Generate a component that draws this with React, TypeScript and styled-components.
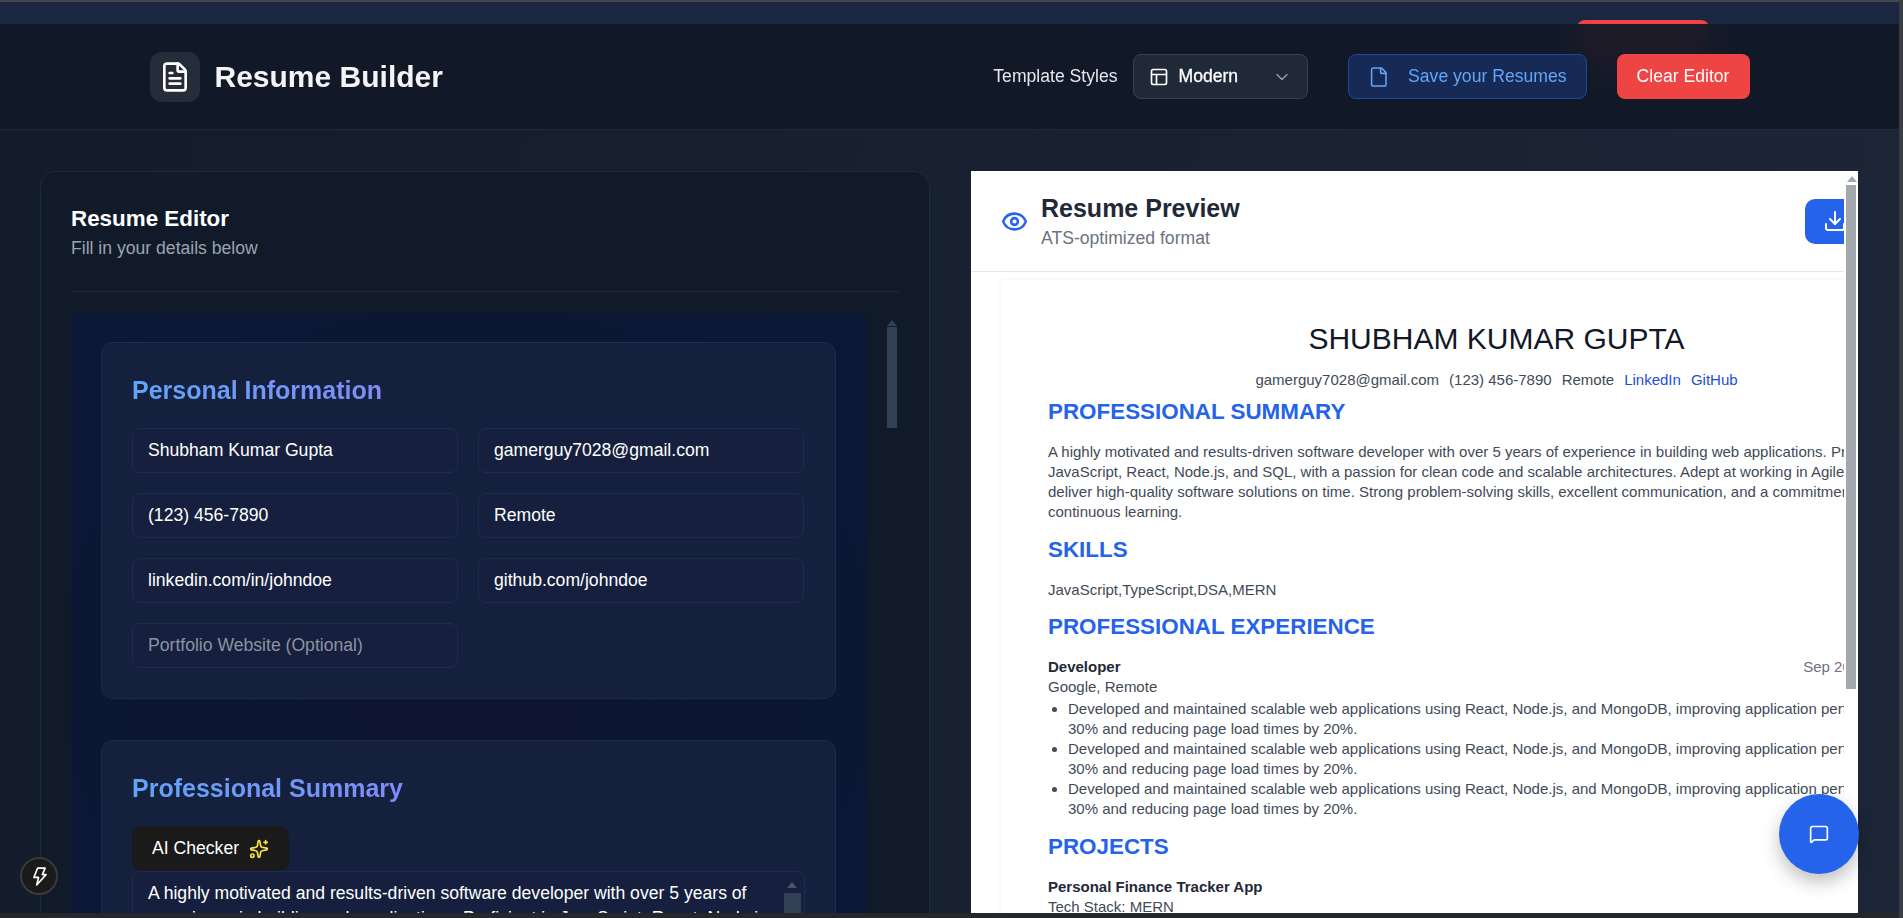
import React from "react";
import styled, { createGlobalStyle } from "styled-components";
import {
  ChevronDown,
  Download,
  Eye,
  File,
  FileText,
  Layout,
  MessageSquare,
  Sparkles,
} from "lucide-react";

const GlobalStyle = createGlobalStyle`
  * {
    box-sizing: border-box;
  }

  html,
  body {
    margin: 0;
    height: 100%;
    overflow: hidden;
    background: #2b2b2b;
    font-family: "Liberation Sans", Arial, sans-serif;
  }
`;

/* Shell */
const Shell = styled.div`
  display: flex;
  height: 918px;
  position: relative;
`;

const WindowEdge = styled.div`
  background: #3a3d42;
  flex: 0 0 4px;
`;

const Page = styled.div`
  background: linear-gradient(100deg, #121c2a 0%, #1c2636 100%);
  display: flex;
  flex: 1;
  flex-direction: column;
  min-width: 0;
  position: relative;
`;

const TopEdge = styled.div`
  background: #45474b;
  flex: 0 0 2px;
`;

const TopBar = styled.div`
  background: #1b2640;
  flex: 0 0 22px;
`;

const BottomEdge = styled.div`
  background: #25272b;
  flex: 0 0 5px;
  z-index: 3;
`;

/* Button sitting behind the translucent header */
const GhostButton = styled.div`
  background: #ef4444;
  border-radius: 8px;
  height: 45px;
  left: 1577px;
  position: absolute;
  top: 20px;
  width: 132px;
`;

/* Header */
const Header = styled.header`
  backdrop-filter: blur(12px);
  background: rgba(17, 24, 39, 0.94);
  border-bottom: 1px solid #1f2a3a;
  display: flex;
  flex: 0 0 106px;
  justify-content: center;
  position: relative;
  z-index: 1;
`;

const HeaderInner = styled.div`
  align-items: center;
  display: flex;
  height: 105px;
  justify-content: space-between;
  width: 1600px;
`;

const Brand = styled.div`
  align-items: center;
  display: flex;
  gap: 15px;
`;

const BrandIcon = styled.div`
  align-items: center;
  background: #252d3a;
  border-radius: 12px;
  color: #fff;
  display: flex;
  height: 50px;
  justify-content: center;
  width: 50px;
`;

const BrandName = styled.h1`
  color: #f3f4f6;
  font-size: 30px;
  font-weight: 700;
  margin: 0;
`;

const Actions = styled.div`
  align-items: center;
  display: flex;
`;

const TemplateLabel = styled.span`
  color: #e5e7eb;
  font-size: 17.6px;
  margin-right: 15px;
`;

const TemplateSelect = styled.div`
  align-items: center;
  background: #1f2937;
  border: 1px solid #374151;
  border-radius: 8px;
  color: #fff;
  display: flex;
  font-size: 17.6px;
  font-weight: 500;
  height: 45px;
  margin-right: 40px;
  padding: 0 15px;
  width: 175px;
`;

const SelectText = styled.span`
  flex: 1;
  margin-left: 10px;
  -webkit-text-stroke: 0.3px #fff;
`;

const SaveButton = styled.div`
  align-items: center;
  background: #172a56;
  border: 1px solid #1e4a92;
  border-radius: 8px;
  color: #60a5fa;
  display: flex;
  font-size: 17.6px;
  gap: 19px;
  height: 45px;
  margin-right: 30px;
  padding: 0 19px;
  white-space: nowrap;
  width: 239px;
`;

const ClearButton = styled.div`
  align-items: center;
  background: #ef4444;
  border-radius: 8px;
  color: #fff;
  display: flex;
  font-size: 17.6px;
  height: 45px;
  justify-content: center;
  width: 133px;
`;

/* Main */
const Main = styled.main`
  display: grid;
  flex: 1;
  gap: 41px;
  grid-template-columns: 890px 887px;
  min-height: 0;
  overflow: hidden;
  padding: 41px 0 0 40px;
`;

/* Editor */
const EditorCard = styled.section`
  background: #111a29;
  border: 1px solid #1f2b3b;
  border-radius: 16px;
  height: 800px;
  padding: 30px 30px 0;
  position: relative;
`;

const EditorTitle = styled.h2`
  color: #fff;
  font-size: 22.4px;
  font-weight: 700;
  line-height: 34px;
  margin: 0;
`;

const EditorSubtitle = styled.p`
  color: #9ca3af;
  font-size: 17.6px;
  line-height: 24px;
  margin: 0 0 31px;
`;

const Divider = styled.hr`
  border: 0;
  border-top: 1px solid #1f2b3b;
  margin: 0 0 20px;
`;

const FormPanel = styled.div`
  background: radial-gradient(ellipse at center, #0e1530 0%, #0b1836 100%);
  display: flex;
  flex-direction: column;
  gap: 41px;
  padding: 30px 30px 0;
  width: 795px;
`;

const SectionCard = styled.div`
  background: #15203c;
  border: 1px solid #1b2b55;
  border-radius: 12px;
  padding: 29px 30px 30px;
`;

const SectionTitle = styled.h3`
  background: linear-gradient(90deg, #60a5fa, #818cf8);
  -webkit-background-clip: text;
  background-clip: text;
  color: transparent;
  font-size: 25px;
  font-weight: 700;
  line-height: 36px;
  margin: 0 0 20px;
  width: fit-content;
`;

const FieldGrid = styled.div`
  display: grid;
  gap: 20px;
  grid-template-columns: 326px 326px;
`;

const Field = styled.input`
  background: #161f3d;
  border: 1px solid #1c2b55;
  border-radius: 8px;
  color: #fff;
  font-family: inherit;
  font-size: 17.6px;
  height: 45px;
  outline: none;
  padding: 0 15px;
  width: 100%;

  &::placeholder {
    color: #8b93a3;
    opacity: 1;
  }
`;

const AiButton = styled.div`
  align-items: center;
  background: #1a1a1a;
  border-radius: 10px;
  color: #fff;
  display: inline-flex;
  font-size: 17.6px;
  gap: 10px;
  height: 45px;
  padding: 0 20px;
  vertical-align: top;
`;

const SummaryBox = styled.div`
  background: #161f3d;
  border: 1px solid #1c2b55;
  border-radius: 8px 8px 0 0;
  color: #fff;
  font-size: 17.6px;
  height: 120px;
  line-height: 25px;
  padding: 9px 30px 0 15px;
  position: relative;
`;

/* Scrollbars, drawn on top of the panels they belong to */
const ScrollArrow = styled.div<{ $left: number; $top: number; $color: string }>`
  border-bottom: 6px solid ${(p) => p.$color};
  border-left: 5px solid transparent;
  border-right: 5px solid transparent;
  height: 0;
  left: ${(p) => p.$left}px;
  position: absolute;
  top: ${(p) => p.$top}px;
  width: 0;
`;

const ScrollThumb = styled.div<{ $left: number; $top: number; $w: number; $h: number; $color: string }>`
  background: ${(p) => p.$color};
  height: ${(p) => p.$h}px;
  left: ${(p) => p.$left}px;
  position: absolute;
  top: ${(p) => p.$top}px;
  width: ${(p) => p.$w}px;
`;

/* Preview */
const PreviewCard = styled.section`
  background: #fff;
  display: flex;
  flex-direction: column;
  height: 800px;
  padding-right: 14px;
  position: relative;
`;

const PreviewClip = styled.div`
  height: 100%;
  overflow: hidden;
`;

const PreviewHeader = styled.div`
  align-items: center;
  border-bottom: 1px solid #e5e7eb;
  display: flex;
  height: 101px;
  justify-content: space-between;
  padding-left: 30px;
  width: 894px;
`;

const PreviewHeading = styled.div`
  align-items: center;
  display: flex;
  gap: 13px;
`;

const PreviewTitle = styled.h2`
  color: #1f2937;
  font-size: 25px;
  font-weight: 700;
  line-height: 32px;
  margin: 1px 0 0;
`;

const PreviewSubtitle = styled.p`
  color: #6b7280;
  font-size: 17.6px;
  line-height: 26px;
  margin: 1px 0 0;
`;

const DownloadButton = styled.div`
  align-items: center;
  background: #2563eb;
  border-radius: 10px;
  color: #fff;
  display: flex;
  height: 45px;
  padding-left: 18px;
  width: 60px;
`;

const Sheet = styled.article`
  box-shadow: 0 0 4px rgba(0, 0, 0, 0.06);
  color: #414a58;
  font-size: 15px;
  line-height: 20px;
  margin: 8px 0 0 30px;
  padding: 40px 48px 40px 47px;
  width: 992px;
`;

const PersonName = styled.h1`
  color: #111827;
  font-size: 30px;
  font-weight: 400;
  line-height: 38px;
  margin: 0 0 12px;
  text-align: center;
`;

const ContactRow = styled.div`
  display: flex;
  gap: 10px;
  justify-content: center;
`;

const ContactLink = styled.a`
  color: #1d4ed8;
`;

const DocHeading = styled.h2<{ $top: number }>`
  color: #2563eb;
  font-size: 22.4px;
  font-weight: 700;
  line-height: 28px;
  margin: ${(p) => p.$top}px 0 16px;
`;

const DocText = styled.p`
  margin: 0;
`;

const JobRow = styled.div`
  display: flex;
  justify-content: space-between;
`;

const JobName = styled.strong`
  color: #1f2937;
`;

const JobDate = styled.span`
  color: #6b7280;
`;

const BulletList = styled.ul`
  margin: 2px 0 0;
  padding-left: 20px;
`;

/* Floating buttons */
const ChatButton = styled.div`
  align-items: center;
  background: #2563eb;
  border-radius: 50%;
  box-shadow: 0 8px 18px rgba(0, 0, 0, 0.25);
  color: #fff;
  display: flex;
  height: 80px;
  justify-content: center;
  left: 1779px;
  position: absolute;
  top: 794px;
  width: 80px;
  z-index: 2;
`;

const DevBadge = styled.div`
  align-items: center;
  background: #1a1a1a;
  border: 2px solid #3a3a3a;
  border-radius: 50%;
  display: flex;
  height: 38px;
  justify-content: center;
  left: 20px;
  position: absolute;
  top: 857px;
  width: 38px;
  z-index: 2;
`;

const bullet =
  "Developed and maintained scalable web applications using React, Node.js, and MongoDB, improving application performance by 30% and reducing page load times by 20%.";

const summary =
  "A highly motivated and results-driven software developer with over 5 years of experience in building web applications. Proficient in JavaScript, React, Node.js, and SQL, with a passion for clean code and scalable architectures. Adept at working in Agile teams to deliver high-quality software solutions on time. Strong problem-solving skills, excellent communication, and a commitment to continuous learning.";

const fields = [
  { value: "Shubham Kumar Gupta" },
  { value: "gamerguy7028@gmail.com" },
  { value: "(123) 456-7890" },
  { value: "Remote" },
  { value: "linkedin.com/in/johndoe" },
  { value: "github.com/johndoe" },
  { value: "", placeholder: "Portfolio Website (Optional)" },
];

export default function App() {
  return (
    <Shell>
      <GlobalStyle />
      <Page>
        <GhostButton />
        <TopEdge />
        <TopBar />
        <Header>
          <HeaderInner>
            <Brand>
              <BrandIcon>
                <FileText size={32} />
              </BrandIcon>
              <BrandName>Resume Builder</BrandName>
            </Brand>
            <Actions>
              <TemplateLabel>Template Styles</TemplateLabel>
              <TemplateSelect>
                <Layout size={20} />
                <SelectText>Modern</SelectText>
                <ChevronDown size={20} color="#9ca3af" strokeWidth={1.5} />
              </TemplateSelect>
              <SaveButton>
                <File size={22} strokeWidth={1.75} />
                Save your Resumes
              </SaveButton>
              <ClearButton>Clear Editor</ClearButton>
            </Actions>
          </HeaderInner>
        </Header>
        <Main>
          <EditorCard>
            <EditorTitle>Resume Editor</EditorTitle>
            <EditorSubtitle>Fill in your details below</EditorSubtitle>
            <Divider />
            <FormPanel>
              <SectionCard>
                <SectionTitle>Personal Information</SectionTitle>
                <FieldGrid>
                  {fields.map((f, i) => (
                    <Field key={i} readOnly value={f.value} placeholder={f.placeholder} />
                  ))}
                </FieldGrid>
              </SectionCard>
              <SectionCard>
                <SectionTitle>Professional Summary</SectionTitle>
                <AiButton>
                  AI Checker
                  <Sparkles size={20} color="#fde047" />
                </AiButton>
                <SummaryBox>
                  {summary}
                  <ScrollArrow $left={654} $top={10} $color="#475569" />
                  <ScrollThumb $left={651} $top={21} $w={17} $h={90} $color="#334155" />
                </SummaryBox>
              </SectionCard>
            </FormPanel>
            <ScrollArrow $left={846} $top={148} $color="#334155" />
            <ScrollThumb $left={846} $top={155} $w={10} $h={101} $color="#334155" />
          </EditorCard>
          <PreviewCard>
            <PreviewClip>
              <PreviewHeader>
                <PreviewHeading>
                  <Eye size={27} color="#2563eb" strokeWidth={2.25} />
                  <div>
                    <PreviewTitle>Resume Preview</PreviewTitle>
                    <PreviewSubtitle>ATS-optimized format</PreviewSubtitle>
                  </div>
                </PreviewHeading>
                <DownloadButton>
                  <Download size={24} />
                </DownloadButton>
              </PreviewHeader>
              <Sheet>
                <PersonName>SHUBHAM KUMAR GUPTA</PersonName>
                <ContactRow>
                  <span>gamerguy7028@gmail.com</span>
                  <span>(123) 456-7890</span>
                  <span>Remote</span>
                  <ContactLink>LinkedIn</ContactLink>
                  <ContactLink>GitHub</ContactLink>
                </ContactRow>
                <DocHeading $top={8}>PROFESSIONAL SUMMARY</DocHeading>
                <DocText>{summary}</DocText>
                <DocHeading $top={14}>SKILLS</DocHeading>
                <DocText>JavaScript,TypeScript,DSA,MERN</DocText>
                <DocHeading $top={13}>PROFESSIONAL EXPERIENCE</DocHeading>
                <JobRow>
                  <JobName>Developer</JobName>
                  <JobDate>Sep 2022 - Sep 2024</JobDate>
                </JobRow>
                <DocText>Google, Remote</DocText>
                <BulletList>
                  <li>{bullet}</li>
                  <li>{bullet}</li>
                  <li>{bullet}</li>
                </BulletList>
                <DocHeading $top={14}>PROJECTS</DocHeading>
                <JobName>Personal Finance Tracker App</JobName>
                <DocText>Tech Stack: MERN</DocText>
              </Sheet>
            </PreviewClip>
            <ScrollArrow $left={876} $top={5} $color="#a3a7ae" />
            <ScrollThumb $left={875} $top={14} $w={10} $h={504} $color="#a3a7ae" />
          </PreviewCard>
        </Main>
        <BottomEdge />
        <ChatButton>
          <MessageSquare size={20} />
        </ChatButton>
        <DevBadge>
          <svg width="15" height="21" viewBox="0 0 16 22" fill="none" stroke="#fff" strokeWidth="1.75" strokeLinejoin="round">
            <path d="M6 2h8l-3 7h4L5 20l2-8H2z" />
          </svg>
        </DevBadge>
      </Page>
      <WindowEdge />
    </Shell>
  );
}
